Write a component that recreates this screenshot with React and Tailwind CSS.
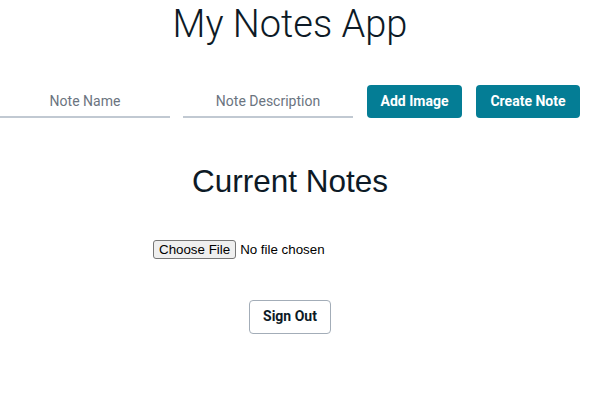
import React from 'react';

export default function App() {
  return (
    <div className="w-[580px] h-[400px] bg-white flex flex-col items-center text-[#0d1a26]" style={{ fontFamily: 'Roboto, sans-serif' }}>
      <h1 className="mt-[3px] text-[38px] leading-[43px] font-light">My Notes App</h1>

      <div className="mt-[39px] flex items-end w-full">
        <input
          placeholder="Note Name"
          className="w-[170px] h-[33px] border-b-2 border-[#c1c9d2] text-center text-[14px] placeholder:text-[#6b7480] outline-none"
        />
        <input
          placeholder="Note Description"
          className="ml-[13px] w-[170px] h-[33px] border-b-2 border-[#c1c9d2] text-center text-[14px] placeholder:text-[#6b7480] outline-none"
        />
        <button className="ml-[14px] w-[95px] h-[33px] rounded-[4px] bg-[#047d95] text-white text-[14px] font-bold">
          Add Image
        </button>
        <button className="ml-[14px] w-[104px] h-[33px] rounded-[4px] bg-[#047d95] text-white text-[14px] font-bold">
          Create Note
        </button>
      </div>

      <h2 className="mt-[43px] text-[31.5px] leading-[40px]" style={{ fontFamily: '"Liberation Sans", Arial, sans-serif' }}>
        Current Notes
      </h2>

      <div className="mt-[39px] w-[274px] text-[13.33px] text-black flex items-center" style={{ fontFamily: '"Liberation Sans", Arial, sans-serif' }}>
        <span className="h-[19px] px-[5px] flex items-center bg-[#efefef] border border-[#767676] rounded-[3px]">Choose File</span>
        <span className="ml-[4px]">No file chosen</span>
      </div>

      <button className="mt-[40px] w-[82px] h-[34px] rounded-[4px] border border-[#a3adb8] text-[14px] font-bold text-[#0d1a26]">
        Sign Out
      </button>
    </div>
  );
}
